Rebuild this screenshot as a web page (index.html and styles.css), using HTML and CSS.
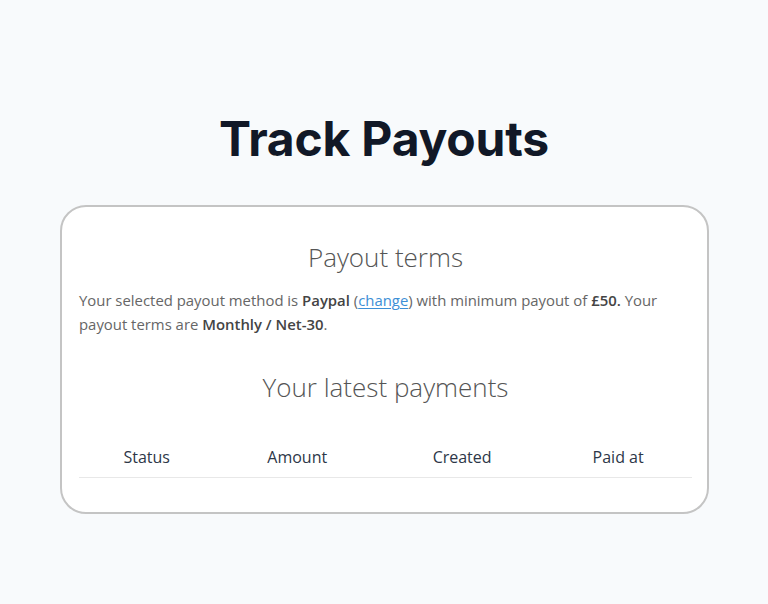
FILE: index.html
```html
<!DOCTYPE html>
<html>
<head>
<meta charset="utf-8">
<link rel="stylesheet" href="styles.css">
</head>
<body>
<main class="page">
  <h1 class="title">Track Payouts</h1>
  <section class="card">
    <h2 class="card-heading">Payout terms</h2>
    <p class="terms">Your selected payout method is <b>Paypal</b> (<a href="#" class="link">change</a>) with minimum payout of <b>£50.</b> Your payout terms are <b>Monthly / Net-30</b>.</p>
    <h2 class="card-heading second">Your latest payments</h2>
    <table class="payments">
      <colgroup>
        <col class="col-status">
        <col class="col-amount">
        <col class="col-created">
        <col class="col-paid">
      </colgroup>
      <thead>
        <tr><th>Status</th><th>Amount</th><th>Created</th><th>Paid at</th></tr>
      </thead>
    </table>
  </section>
</main>
</body>
</html>
```
FILE: styles.css
```css
html, body {
  margin: 0;
  padding: 0;
  background: #f8fafc;
}
.page {
  width: 768px;
  height: 604px;
  display: flex;
  flex-direction: column;
  align-items: center;
  padding-top: 110px;
  box-sizing: border-box;
}
.title {
  margin: 0;
  font-family: Inter, sans-serif;
  font-weight: 700;
  font-size: 48px;
  line-height: 58px;
  color: #111827;
  letter-spacing: -0.2px;
}
.card {
  margin-top: 37px;
  margin-left: 1px;
  width: 649px;
  box-sizing: border-box;
  background: #fff;
  border: 2px solid #c4c4c4;
  border-radius: 26px;
  padding: 32px 15px 34px 17px;
  font-family: "Open Sans", sans-serif;
}
.card-heading {
  margin: 0;
  text-align: center;
  font-weight: 300;
  font-size: 26px;
  line-height: 36px;
  color: #555;
}
.card-heading.second {
  margin-top: 33px;
}
.terms {
  margin: 13px 0 0;
  font-size: 14.9px;
  line-height: 24px;
  color: #666;
}
.terms b {
  font-weight: 600;
  color: #444;
}
.link {
  color: #3d8fd6;
  text-decoration: underline;
  text-decoration-thickness: 1px;
  text-underline-offset: 2px;
}
.payments {
  width: 100%;
  margin-top: 33px;
  border-collapse: collapse;
  table-layout: fixed;
}
.col-status { width: 22.1%; }
.col-amount { width: 27%; }
.col-created { width: 26.8%; }
.col-paid { width: 24.1%; }
.payments th {
  font-weight: 400;
  font-size: 16px;
  color: #2d3748;
  padding: 8px 0 9px;
  border-bottom: 1px solid #e8e8e8;
  text-align: center;
}
```
